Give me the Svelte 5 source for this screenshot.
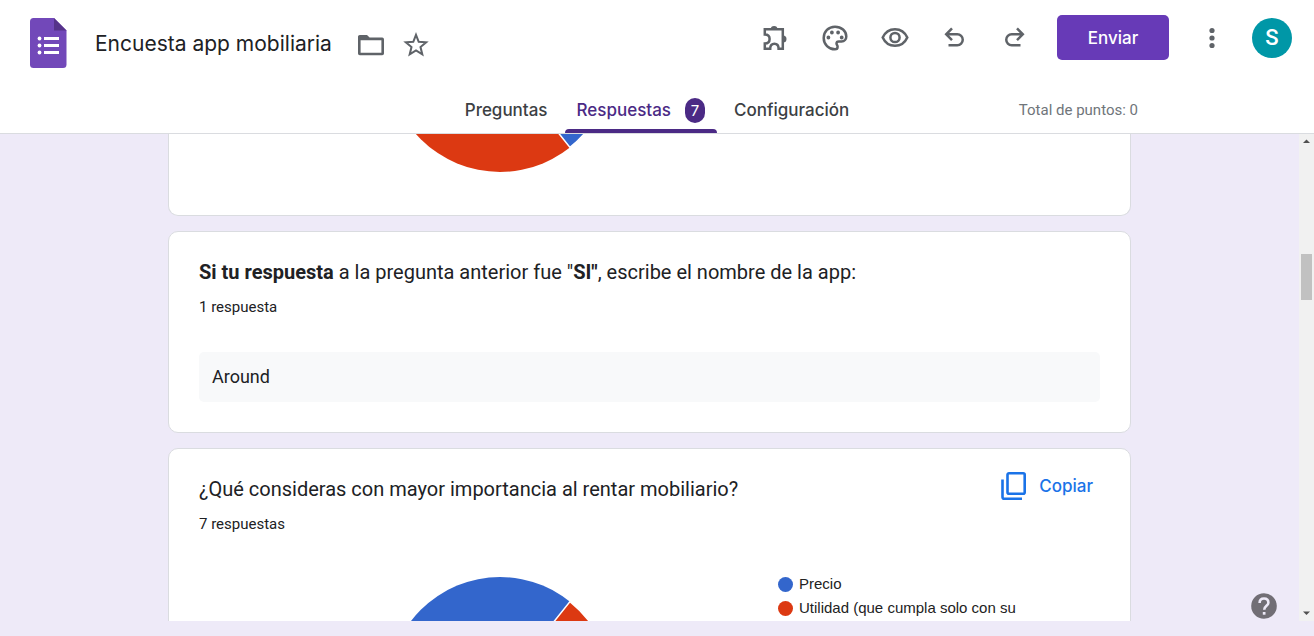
<script>
  const actions = [
    { label: 'Complementos', icon: 'puzzle' },
    { label: 'Personalizar tema', icon: 'palette' },
    { label: 'Vista previa', icon: 'eye' },
    { label: 'Deshacer', icon: 'undo' },
    { label: 'Rehacer', icon: 'redo' }
  ];
  const legend = [
    { label: 'Precio', color: '#3366cc' },
    { label: 'Utilidad (que cumpla solo con su', color: '#dc3912' }
  ];
</script>

{#snippet icon(name)}
  <svg class="icon" viewBox="0 0 30 30" stroke-width="2.5" aria-hidden="true">
    {#if name === 'puzzle'}
      <path d="M4.8 6.3H22.8V25.7H18.6C18.6 22.2 16.9 20.7 14.4 20.7S10.200 22.2 10.200 25.7H4.800V20.500C8 20.500 9.600 18.700 9.600 16S8 11.500 4.800 11.500Z" class="line" />
      <path d="M10.800 6.300a3.300 3.300 0 0 1 6.600 0ZM23 12.600a3.500 3.500 0 0 1 0 7Z" class="solid" />
    {:else if name === 'palette'}
      <path d="M15 3.7C8.500 3.700 3.700 8.600 3.700 15S8.800 26.300 15 26.300c1.700 0 2.600-1.200 2.600-2.600 0-1.600-1.100-1.700-1.100-3.100 0-1.300 1-2.200 2.300-2.200h2.700c3 0 4.800-2.300 4.800-4.900C26.300 8 21.400 3.700 15 3.700Z" class="line" />
      <path d="M6.500 14.500a1.900 1.900 0 1 0 3.800 0a1.900 1.900 0 1 0-3.800 0M10 9.500a1.900 1.900 0 1 0 3.800 0a1.900 1.900 0 1 0-3.800 0M16.200 9.500a1.900 1.900 0 1 0 3.800 0a1.900 1.900 0 1 0-3.800 0M19.800 14.500a1.900 1.900 0 1 0 3.800 0a1.900 1.900 0 1 0-3.800 0" class="solid" />
    {:else if name === 'eye'}
      <path d="M2.700 14.500C5 9.400 9.600 6.200 15 6.200s10 3.200 12.300 8.300C25 19.600 20.400 22.800 15 22.800S5 19.600 2.700 14.500Z" class="line" />
      <circle cx="15" cy="14.5" r="4.6" class="line" />
    {:else if name === 'undo'}
      <path d="M8.500 22.200h8.800a5.400 5.400 0 0 0 0-10.900H6.500M12 5.400L6.200 11.300L12 17.200" class="line" />
    {:else if name === 'redo'}
      <path d="M20.500 22.200h-8.800a5.400 5.400 0 0 1 0-10.900h10.800M17 5.400l5.800 5.900L17 17.200" class="line" />
    {:else if name === 'more'}
      <circle cx="15" cy="7.5" r="2.6" class="solid" />
      <circle cx="15" cy="15" r="2.6" class="solid" />
      <circle cx="15" cy="22.5" r="2.6" class="solid" />
    {:else if name === 'folder'}
      <path d="M2 6.500Q2 5 3.800 5H11l2.600 2.600h12.600Q28 7.600 28 9.400V23.400Q28 25.200 26.200 25.200H3.800Q2 25.200 2 23.400ZM4.600 10.200V22.700H25.400V10.200Z" fill-rule="evenodd" class="solid" />
    {:else if name === 'star'}
      <path d="M15 4.800l2.700 7 7.500.5-5.700 4.800 1.800 7.300-6.300-4-6.300 4 1.800-7.300-5.700-4.800 7.500-.5Z" stroke-width="2" class="line" />
    {/if}
  </svg>
{/snippet}

<div class="page">
  <header>
    <div class="bar">
      <div class="document">
        <a class="logo" href="#inicio" aria-label="Formularios">
          <svg viewBox="0 0 37 50" aria-hidden="true">
            <path d="M3.500 0H24L36.500 12.500V46.500Q36.500 50 33 50H3.500Q0 50 0 46.500V3.500Q0 0 3.500 0Z" fill="#7248b9" />
            <path d="M24 0L36.500 12.500H24Z" fill="#56338a" />
            <path d="M14 19h15v3H14zM14 26h15v3H14zM14 33h15v3H14z" fill="#fff" />
            <circle cx="9.500" cy="20.500" r="1.900" fill="#fff" />
            <circle cx="9.500" cy="27.500" r="1.900" fill="#fff" />
            <circle cx="9.500" cy="34.500" r="1.900" fill="#fff" />
          </svg>
        </a>
        <h1>Encuesta app mobiliaria</h1>
        <div class="file-actions">
          <button aria-label="Mover a carpeta">{@render icon('folder')}</button>
          <button aria-label="Destacar">{@render icon('star')}</button>
        </div>
      </div>
      <div class="tools">
        {#each actions as action}
          <button aria-label={action.label}>{@render icon(action.icon)}</button>
        {/each}
      </div>
      <button class="send">Enviar</button>
      <button class="more" aria-label="Más">{@render icon('more')}</button>
      <button class="avatar" aria-label="Cuenta">S</button>
    </div>
    <div class="sections">
      <nav>
        <a href="#preguntas">Preguntas</a>
        <a href="#respuestas" class="active" aria-current="page">Respuestas <span class="badge">7</span></a>
        <a href="#configuracion">Configuración</a>
      </nav>
      <p class="points">Total de puntos: 0</p>
    </div>
  </header>

  <div class="body">
    <main>
      <section class="card previous">
        <svg class="pie" viewBox="0 0 224 224" role="img" aria-label="Gráfico circular">
          <circle cx="112" cy="112" r="112" fill="#dc3912" />
          <path d="M112 112L182 199.400A112 112 0 0 0 112 0Z" fill="#3366cc" stroke="#fff" stroke-width="1.5" />
        </svg>
      </section>

      <section class="card">
        <h2><b>Si tu respuesta</b> a la pregunta anterior fue "<b>SI"</b>, escribe el nombre de la app:</h2>
        <p class="count">1 respuesta</p>
        <p class="answer">Around</p>
      </section>

      <section class="card">
        <div class="heading">
          <h2>¿Qué consideras con mayor importancia al rentar mobiliario?</h2>
          <button class="copy">
            <svg viewBox="0 0 26 30" fill="none" stroke="#1a73e8" stroke-width="2.6" aria-hidden="true">
              <rect x="6.5" y="2.3" width="17.2" height="20.5" rx="1.5" />
              <path d="M1.500 8.500V26Q1.500 27.800 3.300 27.800H21" />
            </svg>
            Copiar
          </button>
        </div>
        <p class="count">7 respuestas</p>
        <div class="chart">
          <svg class="pie" viewBox="0 0 224 224" role="img" aria-label="Gráfico circular">
            <circle cx="112" cy="112" r="112" fill="#3366cc" />
            <path d="M112 112L182 24.600A112 112 0 0 1 224 112Z" fill="#dc3912" stroke="#fff" stroke-width="1.5" />
          </svg>
          <ul>
            {#each legend as item}
              <li><span class="dot" style="background: {item.color}"></span>{item.label}</li>
            {/each}
          </ul>
        </div>
      </section>
    </main>
    <div class="scrollbar" aria-hidden="true">
      <svg viewBox="0 0 15 15"><path d="M4 9L7.500 5.500L11 9Z" /></svg>
      <span class="thumb"></span>
      <svg viewBox="0 0 15 15"><path d="M4 5.500L7.500 9L11 5.500Z" /></svg>
    </div>
    <button class="help" aria-label="Ayuda">
      <svg viewBox="0 0 26 26" aria-hidden="true">
        <circle cx="13" cy="13" r="12.8" fill="#716e75" />
        <path d="M8.600 9.900C8.600 7 10.400 5.500 13 5.500S17.400 7.200 17.400 9.700C17.400 12.600 13.200 13 13.200 16.700" fill="none" stroke="#eeeaf8" stroke-width="2.6" />
        <rect x="11.8" y="19" width="2.7" height="2.7" fill="#eeeaf8" />
      </svg>
    </button>
  </div>
</div>

<style>
  :global(body) {
    margin: 0;
  }
  * {
    box-sizing: border-box;
  }
  .page {
    height: 100vh;
    display: flex;
    flex-direction: column;
    padding-bottom: 15px;
    overflow: hidden;
    background: #eeeaf8;
    color: #202124;
    font-family: Roboto, sans-serif;
  }
  h1, h2, p, ul {
    margin: 0;
    padding: 0;
    font-weight: 400;
  }
  button {
    border: 0;
    padding: 0;
    background: none;
    cursor: pointer;
  }
  a {
    color: inherit;
    text-decoration: none;
  }
  svg {
    display: block;
  }
  header {
    flex: none;
    background: #fff;
    border-bottom: 1px solid #dadce0;
  }
  .bar {
    display: flex;
    align-items: center;
    padding: 15px 22px 0 30px;
  }
  .document {
    flex: 1;
    display: flex;
    align-items: center;
    height: 45px;
  }
  .logo {
    width: 37px;
    margin-top: 11px;
    margin-right: 28px;
  }
  h1 {
    margin-top: 12px;
    font: 400 21px/28px Inter, sans-serif;
    white-space: nowrap;
  }
  .file-actions {
    display: flex;
    gap: 15px;
    margin: 14px 0 0 24px;
  }
  .icon {
    width: 30px;
    height: 30px;
  }
  .line {
    fill: none;
    stroke: #5f6368;
  }
  .solid {
    fill: #5f6368;
  }
  .tools {
    display: flex;
    gap: 30px;
    margin-right: 27px;
  }
  .send {
    width: 112px;
    height: 45px;
    border-radius: 5px;
    background: #673ab7;
    color: #fff;
    font: 500 17px Inter, sans-serif;
  }
  .more {
    margin: 0 25px 0 28px;
  }
  .avatar {
    width: 40px;
    height: 40px;
    border-radius: 50%;
    background: #0097a7;
    color: #fff;
    font: 500 22px Roboto, sans-serif;
  }
  .sections {
    display: grid;
    grid-template-columns: 1fr auto 1fr;
    align-items: center;
    margin-top: 27px;
  }
  nav {
    grid-column: 2;
    display: flex;
    gap: 5px;
  }
  nav a {
    position: relative;
    display: flex;
    align-items: center;
    gap: 14px;
    height: 46px;
    padding: 0 12px;
    color: #3c4043;
    font: 500 17px Inter, sans-serif;
  }
  nav .active {
    color: #4b2a85;
  }
  .active::after {
    content: '';
    position: absolute;
    inset: auto 0 0;
    height: 4px;
    border-radius: 4px 4px 0 0;
    background: #4b2a85;
  }
  .badge {
    display: grid;
    place-items: center;
    width: 20px;
    height: 25px;
    border-radius: 10px;
    background: #4b2a85;
    color: #fff;
    font-size: 15px;
    font-weight: 400;
  }
  .points {
    justify-self: end;
    padding-right: 176px;
    color: #70757a;
    font-size: 15px;
  }
  .body {
    position: relative;
    flex: 1;
    min-height: 0;
    display: flex;
  }
  main {
    flex: 1;
    min-width: 0;
    overflow: hidden;
    padding: 0 24px;
  }
  .card {
    max-width: 963px;
    margin: 0 auto 15px;
    padding: 25px 30px 30px;
    border: 1px solid #dadce0;
    border-radius: 10px;
    background: #fff;
  }
  .previous {
    display: flex;
    align-items: flex-end;
    height: 82px;
    padding: 0 219px 43px;
    border-top: 0;
    border-radius: 0 0 10px 10px;
    overflow: hidden;
  }
  .pie {
    flex: none;
    width: 224px;
    height: 224px;
  }
  h2 {
    font-size: 20px;
    line-height: 30px;
  }
  .count {
    margin-top: 10px;
    font-size: 15px;
    line-height: 20px;
  }
  .answer {
    margin-top: 35px;
    padding: 0 13px;
    border-radius: 5px;
    background: #f8f9fa;
    font-size: 18px;
    line-height: 50px;
  }
  .heading {
    display: flex;
    justify-content: space-between;
    height: 30px;
  }
  .copy {
    display: flex;
    align-items: center;
    gap: 12px;
    height: 24px;
    padding-right: 7px;
    color: #1a73e8;
    font: 500 17px Inter, sans-serif;
  }
  .copy svg {
    width: 26px;
  }
  .chart {
    display: flex;
    align-items: flex-start;
    gap: 166px;
    margin-top: 43px;
    padding-left: 189px;
  }
  ul {
    list-style: none;
    margin-top: -5px;
    color: #222;
    font: 15px/24px "Liberation Sans", Arial, sans-serif;
    white-space: nowrap;
  }
  li {
    display: flex;
    align-items: center;
    gap: 6px;
  }
  .dot {
    width: 15px;
    height: 15px;
    border-radius: 50%;
  }
  .scrollbar {
    display: grid;
    grid-template-rows: 15px 1fr 15px;
    width: 15px;
    background: #f1f1f1;
    fill: #505050;
  }
  .thumb {
    height: 46px;
    margin: 105px 2px 0;
    background: #c1c1c1;
  }
  .help {
    position: absolute;
    right: 37px;
    bottom: 2px;
  }
  .help svg {
    width: 26px;
  }
</style>
